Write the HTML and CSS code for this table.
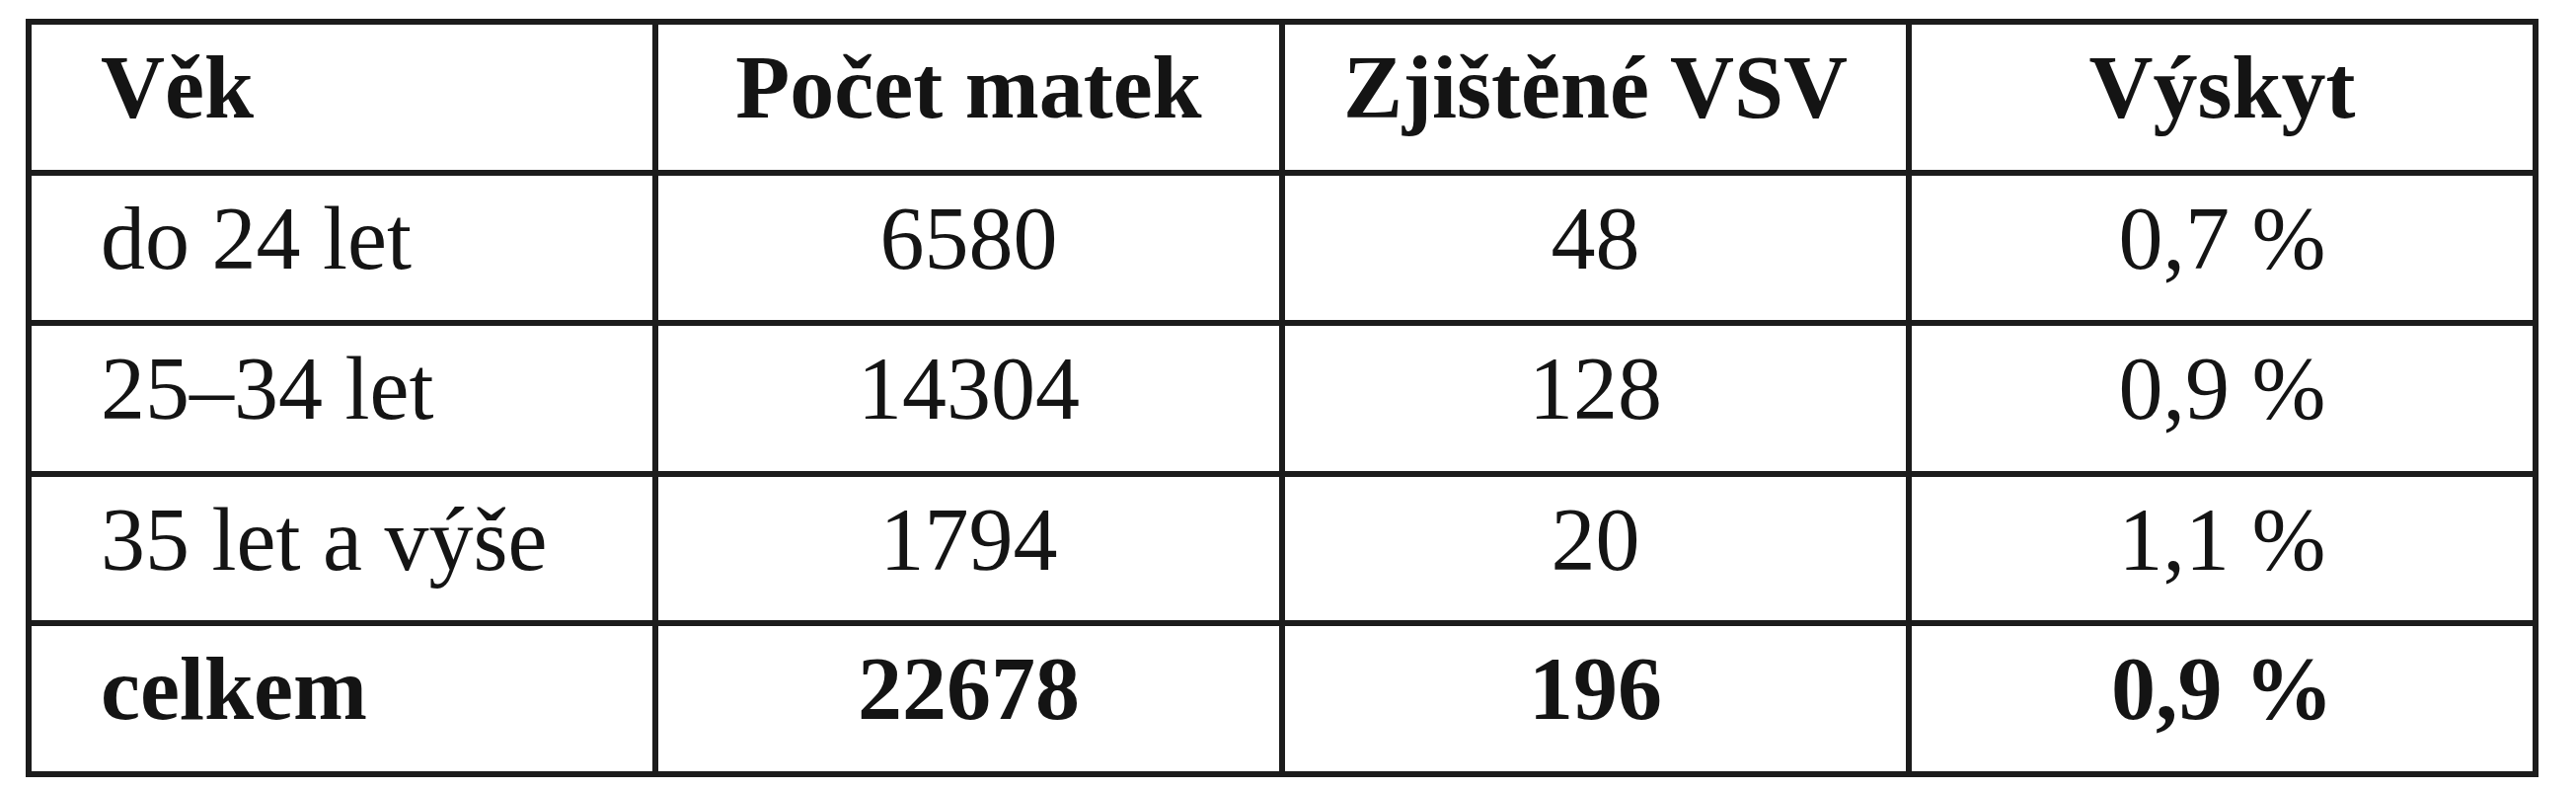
FILE: index.html
```html
<!DOCTYPE html>
<html lang="cs">
<head>
<meta charset="utf-8">
<title>Výskyt VSV podle věku matek</title>
<link rel="stylesheet" href="styles.css">
</head>
<body>
<div class="page">
  <div class="grid" role="table">
    <div class="cell head first" role="columnheader">Věk</div>
    <div class="cell head" role="columnheader">Počet matek</div>
    <div class="cell head" role="columnheader">Zjištěné VSV</div>
    <div class="cell head" role="columnheader">Výskyt</div>

    <div class="cell first">do 24 let</div>
    <div class="cell">6580</div>
    <div class="cell">48</div>
    <div class="cell">0,7 %</div>

    <div class="cell first">25–34 let</div>
    <div class="cell">14304</div>
    <div class="cell">128</div>
    <div class="cell">0,9 %</div>

    <div class="cell first">35 let a výše</div>
    <div class="cell">1794</div>
    <div class="cell">20</div>
    <div class="cell">1,1 %</div>

    <div class="cell first total">celkem</div>
    <div class="cell total">22678</div>
    <div class="cell total">196</div>
    <div class="cell total">0,9 %</div>
  </div>
</div>
</body>
</html>
```
FILE: styles.css
```css
html, body {
  margin: 0;
  padding: 0;
  background: #ffffff;
}

.page {
  padding: 19px 0 0 26px;
}

.grid {
  display: grid;
  grid-template-columns: repeat(4, 629px);
  grid-template-rows: 147px 146px 147px 145px 147px;
  gap: 6px;
  padding: 6px;
  width: max-content;
  background: #1c1c1c;
}

.cell {
  background: #ffffff;
  color: #141414;
  font-family: "Liberation Serif", "Times New Roman", serif;
  font-size: 90px;
  line-height: 1;
  padding-top: 19px;
  text-align: center;
  white-space: nowrap;
  box-sizing: border-box;
}

.cell.first {
  text-align: left;
  padding-left: 70px;
}

.cell.head,
.cell.total {
  font-weight: bold;
}
```
